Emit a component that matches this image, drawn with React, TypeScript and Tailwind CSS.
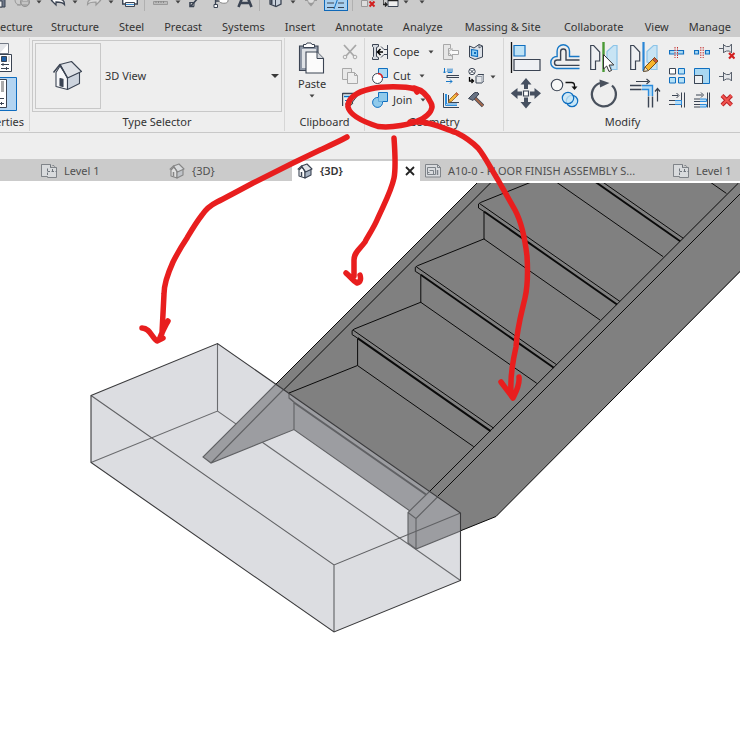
import type { ReactNode } from 'react';
import clsx from 'clsx';

const INK = '#3b4453';
const BLUE = '#0f6fc0';
const SKY = '#a9d8f2';
const MUTED = '#a8a8a8';
const RED = '#d21f1f';

interface IconProps {
  size?: number;
  children: ReactNode;
}

const Icon = ({ size = 16, children }: IconProps) => (
  <svg width={size} height={size} viewBox={`0 0 ${size} ${size}`} fill="none" className="block shrink-0" aria-hidden="true">
    {children}
  </svg>
);

const Caret = () => (
  <svg width="6" height="4" viewBox="0 0 6 4" className="block shrink-0" aria-hidden="true">
    <path d="M.5.5h5L3 3.500z" fill="#444" />
  </svg>
);

const HouseShape = () => (
  <g stroke={INK} strokeWidth="1.100" strokeLinejoin="round">
    <path d="M4 12.500 8 6 15.500 17V29.500L4 26.500z" fill="#f6f7f9" />
    <path d="M15.500 17.500 27.500 12V23.500L15.500 29.500z" fill="#ccd3dd" />
    <path d="M8 4.500 19.500 1.500 29.500 11.500 15.500 18z" fill="#dfe2e7" />
    <path d="M1.500 12.500 8 4.500 15.500 18" strokeWidth="1.500" />
    <path d="M8 18.500 11 19.200V26.500L8 25.800z" fill={INK} />
  </g>
);

const SmallHouse = ({ muted }: { muted?: boolean }) => (
  <svg width="16" height="16" viewBox="0 0 32 32" fill="none" className="block shrink-0" aria-hidden="true">
    <g strokeWidth="2.200" stroke={muted ? '#868686' : INK} strokeLinejoin="round">
      <path d="M4 14 10 8 16 17V30L4 26z" fill={muted ? '#e0e0e0' : '#fff'} />
      <path d="M16 17 28 12V24L16 30z" fill={muted ? '#bfc3c8' : '#a8b4c4'} />
      <path d="M9 6 20 2 30 12 17 18z" fill={muted ? '#d8dadc' : '#dfe3e8'} />
      <path d="M1.500 13 9 6 17 18" />
      <path d="M9 18v9" strokeWidth="3" />
    </g>
  </svg>
);

const PlanIcon = () => (
  <Icon>
    <path d="M.5 1.500h9v3M.5 1.500v12h6" fill="#d6d8da" stroke="#808489" />
    <path d="M.5 1.500h9v3h6v10h-9v-1h-6z" fill="#d9dbdd" stroke="#808489" />
    <path d="M9.500 4.500V2.500h3l3 2.500M6.500 5.500v8M6.500 8.500h9M11.500 8.500v-3" stroke="#6f757c" strokeDasharray="2.500 1.500" />
  </Icon>
);

const SheetIcon = () => (
  <Icon>
    <path d="M.5 1.500h12l3 3v9.500H.5z" fill="#dadcdf" stroke="#808489" />
    <path d="M12.500 1.500v3h3M2.500 4.500h8v7h-8zM4.500 7.500h4v4M2.500 9.500h2" stroke="#7d8389" />
    <path d="M12.500 7v5" stroke="#7d8389" strokeWidth="1.500" />
  </Icon>
);

// ---------- quick access ----------

const QuickIcon = ({ label, className, children }: { label: string; className: string; children: ReactNode }) => (
  <button type="button" aria-label={label} className={clsx('block shrink-0', className)}>
    {children}
  </button>
);

const Divider = ({ className }: { className: string }) => <span className={clsx('h-[19px] w-px shrink-0 bg-[#b0b0b0]', className)} />;

const CaretButton = ({ label, className }: { label: string; className: string }) => (
  <button type="button" aria-label={label} className={clsx('block h-3 shrink-0 pt-2', className)}>
    <Caret />
  </button>
);

const QuickAccess = () => (
  <div className="h-[13px] overflow-hidden">
    <div className="-mt-2 flex items-start">
      <QuickIcon label="Save" className="-ml-2.5">
        <Icon><path d="M1 0h14v15H1z" fill="#70798a" stroke={INK} /><path d="M4 9h8v6H4z" fill="#eee" stroke={INK} /><path d="M6 11h2v4H6z" fill={INK} /></Icon>
      </QuickIcon>
      <QuickIcon label="Synchronize" className="ml-2">
        <Icon><path d="M1 8c0 3 2 5 5 5M3 13l4 0 0-4" stroke="#999" /><circle cx="11" cy="10" r="4.500" fill="#aaa" stroke="#929292" /><path d="M9 8h4M8 11h6" stroke="#ddd" /></Icon>
      </QuickIcon>
      <CaretButton label="Synchronize options" className="ml-1.5" />
      <QuickIcon label="Undo" className="ml-2">
        <Icon><path d="M1.500 8.500 6 4v3c6 0 8.500 1 8.500 5.500-1.500-2-4-2.500-8.500-2.500v3z" fill="#f8f8f8" stroke={INK} strokeWidth="1.300" /></Icon>
      </QuickIcon>
      <CaretButton label="Undo history" className="ml-1.5" />
      <QuickIcon label="Redo" className="ml-2">
        <Icon><path d="M14.500 8.500 10 4v3c-6 0-8.500 1-8.500 5.500 1.500-2 4-2.500 8.500-2.500v3z" fill="#d8d8d8" stroke="#999" strokeWidth="1.200" /></Icon>
      </QuickIcon>
      <CaretButton label="Redo history" className="ml-1.5" />
      <QuickIcon label="Print" className="ml-2">
        <Icon><path d="M.7 3h14.600v9H.7z" fill="#fff" stroke={INK} strokeWidth="1.400" /><path d="M3.500 10.500h9v4h-9z" fill="#eee" stroke={INK} /><path d="M4 12.500h8" stroke="#3b8fd4" /></Icon>
      </QuickIcon>
      <Divider className="ml-1.5" />
      <QuickIcon label="Measure" className="ml-2">
        <Icon><path d="M.5 9.500h14v3H.5z" fill="#bbb" stroke="#999" /><path d="M3 9v2M5.500 9v2M8 9v2M10.500 9v2" stroke="#888" /></Icon>
      </QuickIcon>
      <CaretButton label="Measure options" className="ml-1.5" />
      <QuickIcon label="Aligned dimension" className="ml-2">
        <Icon><path d="M2 14 9 6M1 10v4.500h4" stroke={INK} strokeWidth="1.600" /><path d="M5 14.500v-4H1" stroke={INK} /></Icon>
      </QuickIcon>
      <QuickIcon label="Tag by category" className="ml-2">
        <Icon><path d="M2.500 3v11M2.500 9h4" stroke={INK} strokeWidth="1.300" /><path d="M1 12.500h3.500v3H1z" fill="#fff" stroke={INK} /><path d="M6 4v5c1 3 9 3 9 0V4" fill="#fff" stroke="#888" /></Icon>
      </QuickIcon>
      <QuickIcon label="Text" className="ml-2">
        <Icon><path d="M1.500 15 6.800 2h2.400l5.300 13M4 11h8" stroke={INK} strokeWidth="2.600" /></Icon>
      </QuickIcon>
      <Divider className="ml-1.5" />
      <QuickIcon label="Default 3D view" className="ml-2">
        <Icon><path d="M2 6 8 3 13 6v6l-5 2.500L2 12z" fill="#c8d0da" stroke={INK} strokeWidth="1.300" /><path d="M7.500 7v7" stroke={INK} /><path d="M3.500 8v4" stroke={INK} strokeWidth="2" /></Icon>
      </QuickIcon>
      <CaretButton label="3D view options" className="ml-1.5" />
      <QuickIcon label="Section" className="ml-2">
        <Icon><path d="M1 8.500h4M9 8.500h4" stroke="#999" /><circle cx="7" cy="8" r="3.500" fill="#ddd" stroke="#999" /><path d="M4 11h6l-3 3.500z" fill="#999" /></Icon>
      </QuickIcon>
      <QuickIcon label="Thin lines" className="ml-1">
        <span className="flex h-[19px] w-6 items-center justify-center border border-[#0f68b8] bg-[#a8d0f0]">
          <svg width="20" height="16" viewBox="0 0 20 16" fill="none" aria-hidden="true"><path d="M1 9h7M1 13.500h7M12 9h6M12 13.500h6" stroke={INK} strokeWidth="1.200" /><path d="M8 15 12 4" stroke={BLUE} /></svg>
        </span>
      </QuickIcon>
      <Divider className="ml-1" />
      <QuickIcon label="Close inactive views" className="ml-2">
        <Icon><path d="M.5 8.500h6v6h-6zM3 4h8v5" fill="#ddd" stroke="#999" /><path d="m8.500 9.500 5 5m0-5-5 5" stroke={RED} strokeWidth="2" /></Icon>
      </QuickIcon>
      <QuickIcon label="Switch windows" className="ml-1.5">
        <Icon><path d="M5 7.500h10v7H5z" fill="#eee" stroke={INK} /><path d="M5 8.500h10M0 6.500v6h3.500M2 10.500l2 2-2 2" stroke="#222" strokeWidth="1.300" /></Icon>
      </QuickIcon>
      <CaretButton label="Window list" className="ml-1" />
      <CaretButton label="Customize toolbar" className="ml-2.5" />
    </div>
  </div>
);

const ribbonTabs = [
  { name: 'Structure' },
  { name: 'Steel' },
  { name: 'Precast' },
  { name: 'Systems' },
  { name: 'Insert' },
  { name: 'Annotate' },
  { name: 'Analyze' },
  { name: 'Massing & Site', width: 'w-20' },
  { name: 'Collaborate', width: 'w-[62px]' },
  { name: 'View' },
  { name: 'Manage' },
];

const RibbonTabs = () => (
  <nav className="flex h-6 items-center gap-5 overflow-hidden pt-1 whitespace-nowrap">
    <button type="button" aria-label="Architecture" className="w-[31px] shrink-0 text-right">ecture</button>
    {ribbonTabs.map((tab) => (
      <button key={tab.name} type="button" className={clsx('shrink-0', tab.width)}>{tab.name}</button>
    ))}
  </nav>
);

// ---------- ribbon panels ----------

interface PanelProps {
  title: ReactNode;
  className: string;
  titleClass?: string;
  children: ReactNode;
}

const Panel = ({ title, className, titleClass = 'justify-center', children }: PanelProps) => (
  <section className={clsx('flex h-[93px] shrink-0 flex-col border-r border-[#d6d6d6]', className)}>
    <div className="h-[75px]">{children}</div>
    <h2 className={clsx('flex h-[18px] items-center', titleClass)}>{title}</h2>
  </section>
);

const Tool = ({ label, children }: { label: string; children: ReactNode }) => (
  <button type="button" aria-label={label} className="block">
    {children}
  </button>
);

const PropertiesPanel = () => (
  <Panel title="erties" className="w-[30px]" titleClass="justify-end pr-[5px]">
    <div className="flex flex-col items-start gap-1 pt-1">
      <Tool label="Type properties">
        <svg width="13" height="31" viewBox="0 0 13 31" fill="none" aria-hidden="true">
          <path d="M-6 1.500H8.500v10H-6z" fill="#e4e6ea" stroke="#737a86" />
          <path d="M0 11 8 2v9z" fill="#fff" />
          <path d="M-5 12.500H11.500v17H-5z" fill="#fff" stroke={INK} />
          <path d="M1.500 14.500h5v5h-5z" fill="#1c5fa8" stroke={INK} />
          <path d="M9 14v6" stroke="#b6b6b6" />
          <path d="M1 22.500h8M1 26.500h8M3 21v3M6.500 25v3" stroke={INK} />
        </svg>
      </Tool>
      <Tool label="Properties palette">
        <svg width="17" height="34" viewBox="0 0 17 34" fill="none" aria-hidden="true">
          <path d="M-1 .5H16.500v33H-1z" fill="#b3d4f1" stroke="#0f6cbf" />
          <path d="M-6 2.500H6.500v28H-6z" fill="#fff" stroke={INK} />
          <path d="M1 4h3v11H1z" fill="#ababab" />
          <path d="M0 21.500h4M0 26.500h4M1.500 25v3" stroke={INK} />
        </svg>
      </Tool>
    </div>
  </Panel>
);

const TypeSelector = () => (
  <Panel title={<label htmlFor="view-type">Type Selector</label>} className="w-[255px]">
    <div className="px-0.5 pt-0.5">
      <div className="flex h-[72px] items-stretch border border-[#c8c8c8] p-0.5">
        <div className="flex w-[66px] shrink-0 items-center justify-center border border-[#c8c8c8]">
          <Icon size={32}><HouseShape /></Icon>
        </div>
        <div className="relative flex flex-1 items-center">
          <select id="view-type" className="h-6 w-full appearance-none bg-transparent pl-1">
            <option>3D View</option>
          </select>
          <svg width="8" height="4" viewBox="0 0 8 4" className="pointer-events-none absolute right-0" aria-hidden="true"><path d="M0 0h8L4 4z" fill="#3a3a3a" /></svg>
        </div>
      </div>
    </div>
  </Panel>
);

const ClipboardPanel = () => (
  <Panel title="Clipboard" className="w-20">
    <div className="flex justify-between pt-1 pr-1.5 pl-[13px]">
      <button type="button" className="flex flex-col items-center">
        <svg width="28" height="34" viewBox="0 0 28 34" fill="none" aria-hidden="true">
          <path d="M1.500 4h18.500v24.500H1.500z" fill="#8d96a4" stroke={INK} strokeWidth="1.100" />
          <path d="M4 7h14v19H4z" fill="#dfe2e6" />
          <path d="M5.500 5.500v-3H8l1-1.500h4l1 1.500h2.500v3z" fill="#fff" stroke={INK} />
          <path d="M8 10h11l6.500 6.500v14.500H8z" fill="#fbfbfb" stroke={INK} strokeWidth="1.100" />
          <path d="M19 10v6.500h6.500" fill="#d4d7dc" stroke={INK} />
        </svg>
        <span className="-mt-0.5 flex h-5 items-center">Paste</span>
        <Caret />
      </button>
      <div className="flex flex-col gap-2 pt-0.5">
        <Tool label="Cut to clipboard">
          <Icon><path d="M2 1 12 12M14 1 4 12" stroke={MUTED} strokeWidth="1.800" /><circle cx="3" cy="13" r="1.800" stroke={MUTED} /><circle cx="13" cy="13" r="1.800" stroke={MUTED} /></Icon>
        </Tool>
        <Tool label="Copy to clipboard">
          <Icon><path d="M.5.5h9v11h-9z" fill="#e8e8e8" stroke={MUTED} /><path d="M5.500 4.500h7l3 3v8h-10z" fill="#ededed" stroke={MUTED} /><path d="M12.500 4.500v3h3" stroke={MUTED} /></Icon>
        </Tool>
        <Tool label="Match type">
          <Icon><path d="M.5 1.500h12M.5 1v13" stroke={INK} strokeWidth="1.400" /><path d="M2 3h9v3H2z" fill={SKY} /><path d="M2 4.500h8M3 8.500h4M3 12h3" stroke={BLUE} /><path d="m14.500 1-6 7 2 2 5.500-7z" fill="#ddd" stroke={INK} /><path d="M8.500 8.500 11 11c-1 2-4 3.500-7 3.500 2-1.500 2.500-4.500 4.500-6z" fill="#b8864c" stroke={INK} /></Icon>
        </Tool>
      </div>
    </div>
  </Panel>
);

const GeometryButton = ({ label, children }: { label: string; children: ReactNode }) => (
  <button type="button" className="flex h-4 items-center">
    {children}
    <span className="mr-2 ml-[5px]">{label}</span>
    <Caret />
  </button>
);

const GeometryPanel = () => (
  <Panel title="Geometry" className="w-[139px]">
    <div className="flex pt-1.5 pl-[7px]">
      <div className="flex w-[71px] flex-col items-start gap-2">
        <GeometryButton label="Cope">
          <Icon><path d="M.5.5h6v2l-2 1v9l2 1v2h-6v-2l1-1v-9l-1-1z" fill="#d6dae0" stroke={INK} /><path d="M6 8h5M8.500 5 5.500 8l3 3" stroke="#000" strokeWidth="1.500" /><path d="M15.500 1v14M15 5.500h-3l-3-3M15 10.500h-3l-3 3" stroke={INK} /></Icon>
        </GeometryButton>
        <GeometryButton label="Cut">
          <Icon><path d="M6.500.500h9v9h-9z" fill={SKY} stroke={BLUE} /><circle cx="5.500" cy="10.500" r="5" fill="#fff" stroke={INK} /><path d="M6 5.500a5 5 0 0 1 4.500 4.500" stroke="#e02020" strokeWidth="1.500" /></Icon>
        </GeometryButton>
        <GeometryButton label="Join">
          <Icon><path d="M6.500.500h9v9h-5a5 5 0 1 1-4-4z" fill="#90caeb" stroke={BLUE} /><path d="M6.500 5.500v4h4" stroke="#62a8d8" /></Icon>
        </GeometryButton>
      </div>
      <div className="flex w-[25px] flex-col gap-2">
        <Tool label="Coping">
          <Icon><path d="M.5.5h7v4h-2v7h4v4h-9z" fill="#e6e6e6" stroke={MUTED} /><path d="M5.500 8 9 4.500v2h6.500v4H9v2z" fill="#fafafa" stroke={MUTED} /></Icon>
        </Tool>
        <Tool label="Beam joins">
          <Icon><path d="M1.500 0v5M0 3.500 1.500 5 3 3.500M5 .5v4h4v-4M7 .5v4" stroke="#1778c8" /><path d="M4 7.500h12M4 9.500h12" stroke={INK} /><path d="M4 7v3" stroke={INK} /><path d="M3 13.500h6M7 11.500l2 2-2 2" stroke="#1778c8" /></Icon>
        </Tool>
        <Tool label="Wall joins">
          <Icon><path d="M.5 1v14.500H16M5.500 3v7.500H16" stroke={INK} /><path d="M2.500 2v11.500H14M3.500 2v10H14" stroke="#2f8fdc" /><path d="m13.500.5 2 2-7 7-3 1 1-3z" fill="#f6b73c" stroke="#8b5a1c" strokeWidth=".800" /><path d="m12 2 2 2 1.500-1.500-2-2z" fill="#d66a4a" /></Icon>
        </Tool>
      </div>
      <div className="flex flex-col gap-2">
        <Tool label="Split face">
          <Icon><path d="M1.500 2 6 4l5-3.500L14.500 2v11L7 15.500 1.500 13z" fill="#dde2e8" stroke={INK} /><path d="M11 .5V4l3.500-2" stroke={INK} strokeWidth=".800" /><path d="m3.500 5.500 6 1v6l-6-1z" fill="#8fd0f5" stroke={BLUE} strokeWidth="1.200" /><path d="M6 8h2v2H6z" fill={BLUE} /></Icon>
        </Tool>
        <Tool label="Demolish">
          <Icon><circle cx="4" cy="3.500" r="3.200" fill="#fff" stroke={INK} /><path d="m2 1.500 4 4m0-4-4 4" stroke={INK} /><path d="M1.500 9v4h3M3.500 11l2 2-2 2" stroke="#000" strokeWidth="1.300" /><path d="m8 8.500 2-2h6v6l-2 2.500H8z" fill="#e6e8eb" stroke={INK} /><path d="M8 8.500h6V15M14 8.500l2-2" stroke="#929aa5" /></Icon>
        </Tool>
        <Tool label="Paint">
          <Icon><path d="m7 6 8 8" stroke={INK} strokeWidth="3.400" /><path d="m7 6 8 8" stroke="#a4694c" strokeWidth="2" /><path d="M.5 6.500 6 1l3-1 2 2-6 6.500-2-1z" fill="#697383" stroke={INK} /></Icon>
        </Tool>
      </div>
      <button type="button" aria-label="Demolish options" className="mt-[31px] ml-1.5 self-start">
        <Caret />
      </button>
    </div>
  </Panel>
);

const MirrorHalves = () => (
  <>
    <path d="M.7 3.500h3l6 6.500v9H5.500v8.500H.7z" fill="#eef0f3" stroke={INK} strokeWidth="1.200" />
    <path d="M27 3.500h-3.500l-6.500 6V20l4 1v6.500h6z" fill="#c8e4f4" stroke="#8cc4e8" strokeWidth="1.200" />
  </>
);

const Pin = () => <path d="M0 8.500h4M4.500 4v9M4.500 5l3 1.500h3L12.500 4v9l-2-2h-3l-3 1.500" stroke="#59616d" fill="#e3e5e8" />;

const ModifyPanel = () => (
  <Panel title="Modify" className="w-[238px]">
    <div className="flex pt-1 pl-1.5">
      <div className="grid grid-cols-[repeat(4,40px)] gap-y-1">
        <Tool label="Align">
          <Icon size={32}><path d="M1.500 0v31" stroke="#111" strokeWidth="1.300" /><path d="M4 3.500h11v10.500H4z" fill="#bfe3f6" stroke={BLUE} strokeWidth="1.200" /><path d="M4 17.500h26v11H4z" fill="#eef0f3" stroke={INK} strokeWidth="1.200" /></Icon>
        </Tool>
        <Tool label="Offset">
          <Icon size={32}><path d="M29.500 14.500H19.500V9a6.200 6.200 0 0 0-12.400 0v5.500a6 6 0 0 0-.6 12h23" stroke="#1878c6" strokeWidth="1.400" /><path d="M29.500 18H16V9.700a2.700 2.700 0 0 0-5.400 0V18H7.200a2.700 2.700 0 0 0 0 5.400h22.300" stroke={INK} strokeWidth="1.400" /></Icon>
        </Tool>
        <Tool label="Mirror - pick axis">
          <Icon size={32}><MirrorHalves /><path d="M13.500 0v30" stroke="#4a9a35" strokeWidth="2.400" /><path d="M13.500 12.500V27l3.200-3 2.300 5.500 2.500-1-2.400-5.500h4.700z" fill="#fff" stroke="#333" /></Icon>
        </Tool>
        <Tool label="Mirror - draw axis">
          <Icon size={32}><MirrorHalves /><path d="M13.500 0v29" stroke="#2a86d6" strokeWidth="2.200" /><path d="M13.500 29.500 15 25l9.500-9.500 3.500 3.500-9.500 9.500z" fill="#f7b52c" stroke="#7a4d16" /><path d="m22.500 17.500 3.500 3.500 2-2-3.500-3.500z" fill="#c8583e" stroke="#7a4d16" strokeWidth=".700" /><path d="M13.500 29.500 15 25l3.500 3.500z" fill="#f5dfb8" stroke="#444" strokeWidth=".700" /></Icon>
        </Tool>
        <Tool label="Move">
          <Icon size={32}><path d="M16 0l5.500 6.500H18V11h-4V6.500h-3.500zM16 30.500 10.500 24H14v-4.500h4V24h3.500zM.8 15.300 7.500 10v3.500H12v4H7.500V21zM31 15.300 24.500 10v3.500H20v4h4.500V21z" fill="#465060" /><path d="M13.500 13h5v5h-5z" fill="#fff" stroke={INK} strokeWidth="1.200" /></Icon>
        </Tool>
        <Tool label="Copy">
          <Icon size={32}><circle cx="7" cy="7" r="5.700" fill="#f8f8f8" stroke={INK} strokeWidth="1.100" /><path d="M15.500 4.500h6q3 0 3 3V10" stroke="#111" strokeWidth="1.300" /><path d="M21.500 8.500h6l-3 3.500z" fill="#111" /><circle cx="22" cy="23" r="5.700" fill="#c8e6f6" stroke={BLUE} strokeWidth="1.200" /><circle cx="18" cy="20" r="5.700" fill="#c8e6f6" fillOpacity=".8" stroke={BLUE} strokeWidth="1.200" /></Icon>
        </Tool>
        <Tool label="Rotate">
          <Icon size={32}><path d="M22 7.500A12 12 0 1 1 10 5" stroke="#49515d" strokeWidth="2.300" /><path d="M9.500 1.500 19.500 5 10 9.500z" fill="#49515d" /></Icon>
        </Tool>
        <Tool label="Trim / extend to corner">
          <Icon size={32}><path d="M6 3.500h12M16.500 1 19.500 3.500 16.500 6" stroke="#39414d" strokeWidth="1.200" /><path d="M0 7.500h11.500M0 11.500h11.500M18.500 18.500v11M22.500 18.500v11" stroke={INK} strokeWidth="1.400" /><path d="M12 9.500h8.500V18" stroke="#b8ddf5" strokeWidth="4" /><path d="M12 7.500h10.500V18M12 11.500h6.500V18" stroke="#2b8bdc" strokeWidth="1.400" /><path d="M27.500 23.500V11M25 13.500l2.500-3 2.500 3" stroke="#39414d" strokeWidth="1.200" /></Icon>
        </Tool>
      </div>
      <div className="-ml-px grid grid-cols-[repeat(3,25px)] content-start gap-y-2 pt-0.5">
        <Tool label="Split element">
          <Icon><path d="M.5 6.500h14v3.500H.5z" fill={SKY} stroke={BLUE} strokeWidth="1.200" /><path d="M5.500 4h3.500v9H5.500z" fill="#eee" fillOpacity=".5" /><path d="M6 3v11M8.500 3v11" stroke="#c22c2c" strokeDasharray="1.500 1" /></Icon>
        </Tool>
        <Tool label="Split with gap">
          <Icon><path d="M.5 6.500h4v3.500h-4zM11.500 6.500h4v3.500h-4z" fill={SKY} stroke={BLUE} strokeWidth="1.200" /><path d="M6.800 3v11M9.200 3v11" stroke="#c22c2c" strokeDasharray="1.500 1" /></Icon>
        </Tool>
        <Tool label="Unpin">
          <Icon><g transform="translate(0 -4)"><Pin /></g><path d="m10 9 5.500 5.500m0-5.500L10 14.500" stroke={RED} strokeWidth="2.200" /></Icon>
        </Tool>
        <Tool label="Array">
          <Icon><path d="M.5.500h6v5.500h-6z" fill="#fff" stroke={INK} /><path d="M9.500.500h6v5.500h-6zM.5 9.500h6v5.500h-6zM9.500 9.500h6v5.500h-6z" fill="#b5e0f6" stroke={BLUE} /></Icon>
        </Tool>
        <Tool label="Scale">
          <Icon><path d="M.5.500h15v15H.500z" fill={SKY} stroke={BLUE} /><path d="M.5 7.500h8v8h-8z" fill="#eef0f2" stroke={INK} /></Icon>
        </Tool>
        <Tool label="Pin">
          <Icon><Pin /></Icon>
        </Tool>
        <Tool label="Trim / extend single">
          <Icon><path d="M3 3.500h6M7.500 1l2.500 2.500L7.500 6M0 8.500h6M0 12.500h6M12.500.5v15M15.500.5v15" stroke={INK} /><path d="M6 8.500h6.500v4H6" fill="#b8ddf5" stroke="#2b8bdc" /></Icon>
        </Tool>
        <Tool label="Trim / extend multiple">
          <Icon><path d="M2 3h6M7 .5 9.500 3 7 5.500M0 7h6M0 9.500h6M0 12.500h6M0 15h6M13.500.5v15M15.500.5v15" stroke={INK} /><path d="M6 7h6.500v2.500H6M6 12.500h6.500V15H6" fill="#b8ddf5" stroke="#2b8bdc" /></Icon>
        </Tool>
        <Tool label="Delete">
          <Icon><path d="m3 3.500 9.500 9.500m0-9.500L3 13" stroke="#b81e24" strokeWidth="4" /><path d="m3 3.500 9.500 9.500m0-9.500L3 13" stroke="#f0544f" strokeWidth="2.200" /></Icon>
        </Tool>
      </div>
    </div>
  </Panel>
);

// ---------- view tabs ----------

interface ViewTabProps {
  title: string;
  icon: ReactNode;
  className?: string;
}

const ViewTab = ({ title, icon, className = 'w-32' }: ViewTabProps) => (
  <button type="button" className={clsx('flex h-[22px] shrink-0 items-center gap-[7px] pt-0.5 pl-[5px] text-[#505050]', className)}>
    {icon}
    <span>{title}</span>
  </button>
);

const ViewTabs = () => (
  <div className="flex h-[22px] overflow-hidden bg-[#cbcbcb] pl-9 whitespace-nowrap">
    <ViewTab title="Level 1" icon={<PlanIcon />} />
    <ViewTab title="{3D}" icon={<SmallHouse muted />} />
    <div className="mt-0.5 flex h-5 w-32 shrink-0 items-center gap-[7px] bg-white pr-1 pl-[5px]">
      <SmallHouse />
      <span className="flex-1 font-semibold">{'{3D}'}</span>
      <button type="button" aria-label="Close view">
        <svg width="12" height="12" viewBox="0 0 12 12" aria-hidden="true"><path d="m2 2 8 8m0-8-8 8" stroke="#222" strokeWidth="1.800" /></svg>
      </button>
    </div>
    <ViewTab title="A10-0 - FLOOR FINISH ASSEMBLY S..." icon={<SheetIcon />} className="w-[248px]" />
    <ViewTab title="Level 1" icon={<PlanIcon />} />
  </div>
);

// ---------- 3D model ----------

// top left corner of each tread nosing, highest first
const steps = [-2, -1, 0, 1, 2].map((i) => ({ x: 478.5 - 63.2 * i, y: 203 + 63.3 * i }));

const Step = ({ x, y }: { x: number; y: number }) => (
  <g>
    <path d={`M${x + 69} ${y - 27.500}L${x + 2} ${y - 0.5}L${x} ${y + 1}V${y + 5}L${x + 5.500} ${y + 8.500}`} />
    <path d={`M${x + 1} ${y + 0.5}l140.500 98`} />
    <path d={`M${x + 5.500} ${y + 8.500}l133 93`} strokeWidth="1.900" />
    <path d={`M${x + 5.500} ${y + 9}v27l116 81`} />
  </g>
);

const StairModel = () => (
  <svg width="740" height="555" viewBox="0 183 740 555" fill="none" className="block" role="img" aria-label="Stair and landing slab">
    <path d="M477 183 203 457 294 429 410 511 416 549 496 516.500 742 270V183z" fill="#808080" />
    <g stroke="#0a0a0a">
      <path d="M477 183 276 384M490.500 183 283 390.500M738.500 183 430 491M742 192 438 496M742 269.500 496 516.500 460 531" />
      {steps.map((step) => (
        <Step key={step.x} x={step.x} y={step.y} />
      ))}
      <path d="M357.500 365.500 289 393" />
    </g>

    {/* slab */}
    <path d="M91 395.500 217.500 343.500 460.500 513V580.500L334 632 91 462.500z" fill="#dcdde1" />
    <path d="M91 462.500 217.500 411 460.500 580.500M217.500 343.500V411" stroke="#6a6b6e" strokeWidth="1.100" />

    {/* stair seen through the slab */}
    <path d="M276 384 203 457 211 463 294 429.500 410 511 408 513V543L416 549 460.500 531V513z" fill="#9c9da1" />
    <g stroke="#606164" strokeWidth="1.100">
      <path d="M276 384 203 457l8 6L294 429.500 410 511M283.500 389.500 211 463M289 393v5l5 4v27.500" />
      <path d="M289 398 294 402" />
      <path d="M294 402.500 426 494.500" strokeWidth="2" />
      <path d="M430 491 408 512.500V543l8 6L460.500 531M408 512.500l8 6V549M416 518.500 438 496.500" />
      <path d="M91 395.500 334 565 460.500 513M334 565V632" />
    </g>
    <path d="M91 395.500 217.500 343.500 460.500 513V580.500L334 632 91 462.500z" stroke="#3a3a3c" strokeWidth="1.100" />
  </svg>
);

const Markup = () => (
  <svg
    width="740"
    height="738"
    viewBox="0 0 740 738"
    fill="none"
    stroke="#e81e1e"
    strokeWidth="5.500"
    strokeLinecap="round"
    strokeLinejoin="round"
    className="pointer-events-none absolute top-0 left-0"
    aria-hidden="true"
  >
    <path d="M417 92 415 89C405 86 382 86 370 89 356 92 347 99 348 107 350 116 364 122 378 126.500 392 128 410 125 422 119 430 114 434 108 431 103 428 96 422 90 414 88" />
    <path d="M347 137C340 141 331 145 320 150L293 163 253 183C240 190 225 198 217 202 211 205 206 209 202 215 195 224 190 233 187 238 181 247 177 254 173 262 168 273 164 284 164 294L162 333M142 328C150 328 152 338 157 341L163 338M159 340C161 335 165 326 168 321" />
    <path d="M394 138C395 152 396 168 394 178 391 192 384 204 377 220 373 229 368 236 365 242 360 249 354 252 354 260V276M346 273C351 277 353 281 357 283 361 282 361 278 360 275" />
    <path d="M410 122C428 120 445 129 457 133 465 137 473 143 478 148 484 155 490 167 498 180L515 210C522 223 525 239 527 256 528 272 528 285 525 298 521 315 517 328 516 347 513 360 510 375 511 393M501 382 513 398C516 392 520 385 519 377" />
  </svg>
);

export default function App() {
  return (
    <div className="relative min-h-screen overflow-hidden bg-white font-['Noto_Sans',sans-serif] text-[11px] leading-4 text-[#333]">
      <header className="bg-[#cbcbcb]">
        <QuickAccess />
        <RibbonTabs />
        <div className="flex h-24 overflow-hidden border-b border-[#c8c8c8] bg-[#eee] pt-px">
          <PropertiesPanel />
          <TypeSelector />
          <ClipboardPanel />
          <GeometryPanel />
          <ModifyPanel />
        </div>
        <div className="h-[26px] bg-[#eee]" />
      </header>
      <ViewTabs />
      <main className="pt-0.5">
        <StairModel />
      </main>
      <Markup />
    </div>
  );
}
